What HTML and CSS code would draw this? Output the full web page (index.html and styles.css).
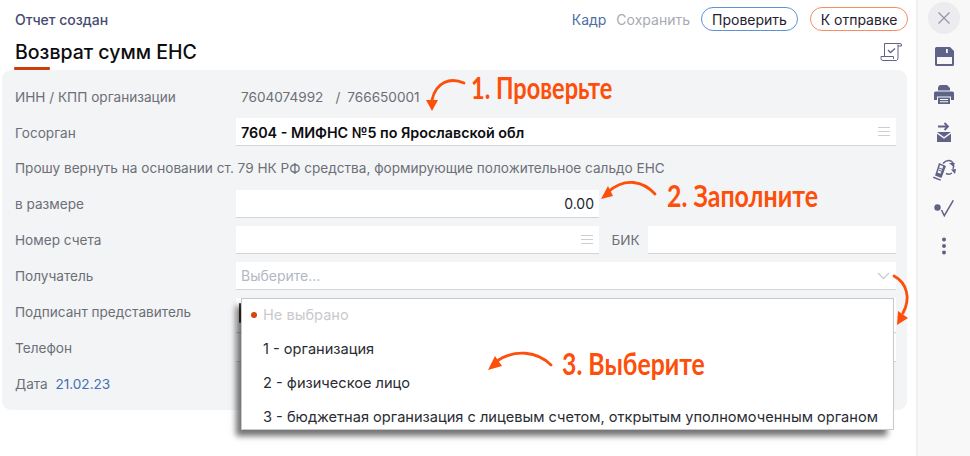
FILE: index.html
```html
<!DOCTYPE html>
<html lang="ru">
<head>
<meta charset="utf-8">
<title>Возврат сумм ЕНС</title>
<link rel="stylesheet" href="styles.css">
</head>
<body>
<div class="app">
  <main class="main">
    <header class="topbar">
      <span class="status">Отчет создан</span>
      <nav class="actions">
        <a class="link link-blue">Кадр</a>
        <a class="link link-muted">Сохранить</a>
        <button class="pill pill-blue">Проверить</button>
        <button class="pill pill-orange">К отправке</button>
      </nav>
    </header>
    <div class="titlebar">
      <h1 class="title">Возврат сумм ЕНС</h1>
      <svg class="scroll-icon" width="23" height="20" viewBox="0 0 23 20" fill="none" stroke="#5f6388" stroke-width="1">
        <path d="M4.500 14.500V1.500H20a1.500 1.500 0 0 1 1.500 1.500v1H18M18 2.500V15.500a3 3 0 0 1-1.500 3H3a2 2 0 0 1-2-2v-2h12.500v2.500"/>
        <path d="M8 8l2.500 2.500L15 6.500" stroke-width="1.300"/>
      </svg>
    </div>
    <div class="underline"></div>
    <section class="panel">
      <div class="row row-top"><label class="label">ИНН / КПП организации</label><span class="plain"><span class="inn">7604074992</span><span class="slash">/</span>766650001</span></div>
      <div class="row row-top"><label class="label">Госорган</label><div class="field field-full"><span class="bold">7604 - МИФНС №5 по Ярославской обл</span><span class="burger"></span></div></div>
      <div class="row"><span class="label label-wide">Прошу вернуть на основании ст. 79 НК РФ средства, формирующие положительное сальдо ЕНС</span></div>
      <div class="row"><label class="label">в размере</label><div class="field field-sum"><span class="sum">0.00</span></div></div>
      <div class="row"><label class="label">Номер счета</label><div class="field field-sum"><span class="spacer"></span><span class="burger"></span></div><label class="bik-label">БИК</label><div class="field field-bik"></div></div>
      <div class="row"><label class="label">Получатель</label><div class="field field-full"><span class="placeholder">Выберите...</span>
        <svg class="chevron" width="13" height="8" viewBox="0 0 13 8" fill="none" stroke="#c9ccd1" stroke-width="1.300"><path d="M1 1l5.500 5.500L12 1"/></svg></div></div>
      <div class="row"><label class="label">Подписант представитель</label><div class="field field-full field-signer"><span class="signer-mark"></span></div></div>
      <div class="row"><label class="label">Телефон</label><div class="field field-full field-phone"></div></div>
      <div class="row"><span class="label label-wide">Дата&nbsp; <span class="date">21.02.23</span></span></div>
    </section>

    <ul class="menu">
      <li class="option option-none">Не выбрано</li>
      <li class="option">1 - организация</li>
      <li class="option">2 - физическое лицо</li>
      <li class="option">3 - бюджетная организация с лицевым счетом, открытым уполномоченным органом</li>
    </ul>

    <svg class="overlay-arrows" width="970" height="456" viewBox="0 0 970 456" fill="none" stroke="#fd4e0a" stroke-width="2.800" stroke-linecap="round">
      <path d="M464 83C450 77 436 82 432 100"/>
      <path d="M426 100h12l-6 11z" fill="#fd4e0a" stroke="none"/>
      <path d="M655 194C643 181 625 177 608 192"/>
      <path d="M601 199l7-13 5 10z" fill="#fd4e0a" stroke="none"/>
      <path d="M551 365C537 351 515 349 497 361"/>
      <path d="M488 370l7-14 7 10z" fill="#fd4e0a" stroke="none"/>
      <path d="M894 276C907 283 911 298 903 313"/>
      <path d="M897 325l1-14 10 7z" fill="#fd4e0a" stroke="none"/>
    </svg>
    <span class="note note-1">1. Проверьте</span>
    <span class="note note-2">2. Заполните</span>
    <span class="note note-3">3. Выберите</span>
  </main>

  <aside class="sidebar">
    <button class="close" aria-label="Закрыть">
      <svg width="14" height="14" viewBox="0 0 14 14" stroke="#8f93ab" stroke-width="1.200"><path d="M1.500 1.500l11 11M12.500 1.500l-11 11"/></svg>
    </button>
    <span class="tool">
      <svg width="19" height="19" viewBox="0 0 19 19"><path fill="#5f6388" fill-rule="evenodd" d="M1.500 0H15l4 4v13.500a1.500 1.500 0 0 1-1.500 1.500h-16A1.500 1.500 0 0 1 0 17.500v-16A1.500 1.500 0 0 1 1.500 0zM11 2v4h1.800V2zM2 10v7h15v-7z"/></svg>
    </span>
    <span class="tool">
      <svg width="20" height="19" viewBox="0 0 20 19"><path fill="#5f6388" fill-rule="evenodd" d="M4 3.500C4 1.500 5 0 7 0h6l3 3v2.500H4zM1.500 6.500h17A1.500 1.500 0 0 1 20 8v7h-3v-3.500H3V15H0V8a1.500 1.500 0 0 1 1.500-1.500zM4 12.500h12V19H4zM6 14v1h8v-1zm0 2.200v1h8v-1z"/></svg>
    </span>
    <span class="tool">
      <svg width="16" height="20" viewBox="0 0 16 20"><path d="M2 4.500h10M8.500 1l3.500 3.500L8.500 8" fill="none" stroke="#5f6388" stroke-width="1.800"/><path fill="#5f6388" d="M1 10h14l-7 5zM1 11.800V20h14v-8.200l-7 5z"/></svg>
    </span>
    <span class="tool">
      <svg width="24" height="22" viewBox="0 0 24 22" fill="none" stroke="#5f6388"><path fill="#5f6388" stroke="none" fill-rule="evenodd" d="M7 4l7 3-4.500 12L3 16.500l1-3zm1 2L5.500 13.500l3 1.200 2.700-7.500zM1.500 17.500L9 20.500l-.5 1.300L1 19z"/><path stroke-width="1" d="M7 9l3 1.200M6.500 11l3 1.200"/><path stroke-width="1.500" d="M11 4.500c3-4 8-4 10-.5 1 2 1 4 0 6M20 14c-2 1.500-4 1.500-6 .5"/><path fill="#5f6388" stroke="none" d="M17 4l6 0-2 3.500zM19 10.500l5-.5-1 5z"/></svg>
    </span>
    <span class="tool">
      <svg width="20" height="17" viewBox="0 0 20 17" fill="none"><circle cx="3.500" cy="7.500" r="3.200" fill="#5f6388"/><path d="M7.500 10l2.800 5.700L19.300.3" stroke="#5f6388" stroke-width="1.500"/></svg>
    </span>
    <span class="tool">
      <svg width="6" height="18" viewBox="0 0 6 18"><circle cx="3" cy="2.500" r="2" fill="#5f6388"/><circle cx="3" cy="9" r="2" fill="#5f6388"/><circle cx="3" cy="15.500" r="2" fill="#5f6388"/></svg>
    </span>
  </aside>
</div>
</body>
</html>
```
FILE: styles.css
```css
* { box-sizing: border-box; }
html, body { margin: 0; padding: 0; }
body { width: 970px; height: 456px; overflow: hidden; background: #fff; font-family: Inter, "Noto Sans", sans-serif; font-size: 13.6px; color: #6c6f76; }
.app { display: flex; height: 456px; }
.main { position: relative; width: 916px; padding: 0 9px 0 2px; }
.topbar { display: flex; justify-content: space-between; align-items: center; height: 38px; padding: 0 0 0 13px; margin-right: -1px; }
.status { font-size: 14px; font-weight: 500; color: #474a70; }
.actions { display: flex; align-items: center; }
.link { font-size: 14px; margin-right: 10px; }
.link-blue { color: #4a6fa5; }
.link-muted { color: #a7abb2; margin-right: 11px; }
.pill { height: 24px; padding: 0; width: 97px; border-radius: 12px; background: #fff; font: 14px Inter, sans-serif; color: #1f2230; }
.pill-blue { border: 1px solid #5b93d6; margin-right: 12px; }
.pill-orange { border: 1px solid #f58d62; width: 98px; }
.titlebar { display: flex; justify-content: space-between; align-items: center; height: 28px; padding: 0 4px 0 13px; }
.title { margin: 0; font-size: 19.5px; font-weight: 500; color: #0c0c0f; line-height: 28px; }
.underline { width: 36px; height: 3px; margin-left: 12px; margin-top: 1px; background: #c9400a; border-radius: 1px; }
.panel { height: 340px; padding: 9px 11px 8px 13px; background: #f3f4f6; border-radius: 9px; }
.row { display: flex; align-items: center; height: 36px; }
.label { flex: none; width: 221px; padding-bottom: 3px; }
.row-top .label { padding-bottom: 1px; }
.label-wide { width: auto; }
.plain { padding-left: 5px; padding-bottom: 1px; }
.inn { margin-right: 12px; }
.slash { margin-right: 7px; }
.field { display: flex; align-items: center; justify-content: space-between; height: 28px; padding: 0 5px; background: #fff; border-bottom: 1px solid #d2d4d8; margin-top: -2px; }
.field-full { width: 660px; }
.field-sum { width: 363px; }
.field-bik { width: 248px; }
.field-signer { align-self: flex-start; height: 35px; margin-top: 3px; position: relative; }
.field-phone { align-self: flex-start; margin-top: 3px; }
.signer-mark { position: absolute; left: 3px; top: 5px; width: 2px; height: 20px; background: #4a3a32; border-radius: 1px; }
.bik-label { width: 49px; padding-left: 4px; text-align: center; padding-bottom: 3px; }
.bold { font-size: 14.3px; font-weight: 600; color: #0c0c10; padding-top: 1px; }
.sum { margin-left: auto; font-size: 14px; color: #22252e; }
.placeholder { font-size: 14px; color: #b3b8c4; }
.spacer { flex: 1; }
.burger { width: 12px; height: 9px; margin-right: 1px; border-top: 1px solid #ccced2; border-bottom: 1px solid #ccced2; position: relative; }
.burger::after { content: ""; position: absolute; left: 0; right: 0; top: 3px; border-top: 1px solid #ccced2; }
.chevron { margin-right: 1px; }
.date { color: #3f6fb5; }
.menu { position: absolute; left: 241px; top: 298px; width: 653px; height: 132px; margin: 0; padding: 0; list-style: none; background: #fff; border: 1px solid #c8c9cc; box-shadow: -6px 7px 6px -1px rgba(0, 0, 0, .55); overflow: hidden; font-size: 14.6px; }
.option { position: relative; height: 34px; padding: 0 0 0 21px; line-height: 34px; color: #2a2c33; white-space: nowrap; }
.option-none { color: #c9cacd; height: 33px; line-height: 32px; }
.option-none::before { content: ""; position: absolute; left: 9px; top: 13px; width: 6px; height: 6px; border-radius: 50%; background: #d2470f; }
.overlay-arrows { position: absolute; left: 0; top: 0; pointer-events: none; }
.note { position: absolute; font-family: Lato, "Liberation Sans", sans-serif; font-weight: 700; font-size: 31px; line-height: 36px; color: #fd4e0a; white-space: nowrap; transform-origin: 0 50%; }
.note-1 { left: 471px; top: 69px; transform: scaleX(.76); }
.note-2 { left: 667px; top: 177px; transform: scaleX(.804); }
.note-3 { left: 562px; top: 345px; transform: scaleX(.8); }
.sidebar { width: 54px; display: flex; flex-direction: column; align-items: center; padding-top: 2px; background: #f8f8f9; border-left: 2px solid #f0f0f2; }
.close { flex: none; width: 32px; height: 32px; margin-bottom: 3px; padding: 0; border: 0; border-radius: 50%; background: #ececee; display: flex; align-items: center; justify-content: center; }
.tool { flex: none; display: flex; align-items: center; justify-content: center; height: 38px; }
```
